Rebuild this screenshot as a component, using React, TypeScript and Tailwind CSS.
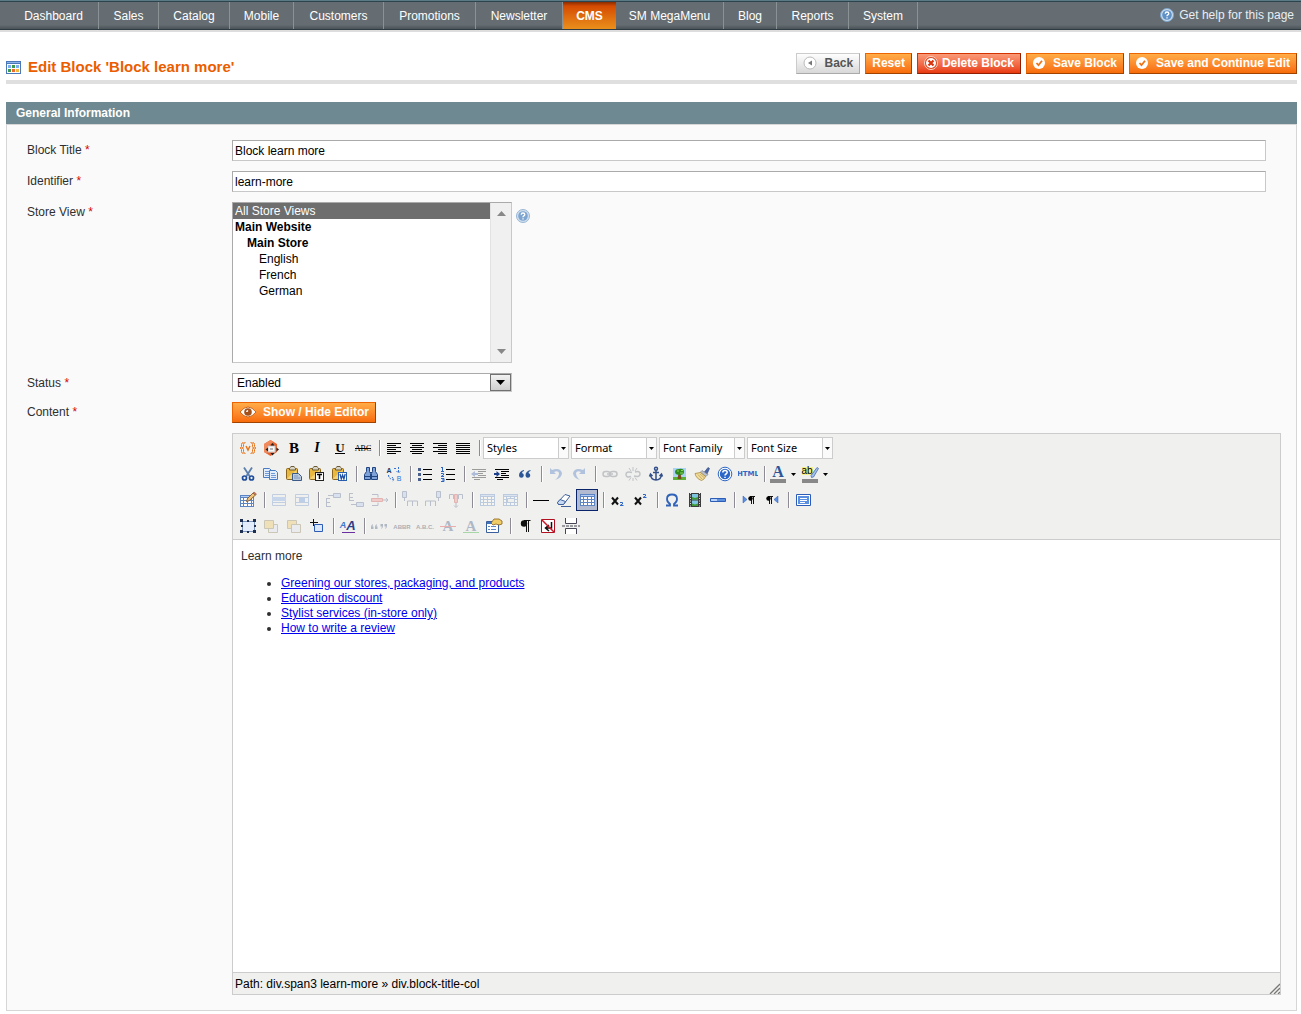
import React from 'react';
import clsx from 'clsx';

const navItems = [
  { name: 'Dashboard', width: 'w-[90px]' },
  { name: 'Sales', width: 'w-[60px]' },
  { name: 'Catalog', width: 'w-[71px]' },
  { name: 'Mobile', width: 'w-[64px]' },
  { name: 'Customers', width: 'w-[90px]' },
  { name: 'Promotions', width: 'w-[92px]' },
  { name: 'Newsletter', width: 'w-[87px]' },
  { name: 'CMS', width: 'w-[53px]' },
  { name: 'SM MegaMenu', width: 'w-[108px]' },
  { name: 'Blog', width: 'w-[53px]' },
  { name: 'Reports', width: 'w-[72px]' },
  { name: 'System', width: 'w-[69px]' },
];

const links = [
  'Greening our stores, packaging, and products',
  'Education discount',
  'Stylist services (in-store only)',
  'How to write a review',
];

const BLUE = '#2b5797';

/* Small shapes shared by the toolbar icons */

const Lines: React.FC<{ rows: number[][]; color?: string }> = ({ rows, color = '#000' }) => (
  <g shapeRendering="crispEdges" fill={color}>
    {rows.map(([x, y, w]) => <rect key={`${x}-${y}`} x={x} y={y} width={w} height="1" />)}
  </g>
);

const Page: React.FC<{ x: number; y: number }> = ({ x, y }) => (
  <g>
    <path d={`M${x + 0.5} ${y + 0.5}h6l2 2v7h-8z`} fill="#e4eefb" stroke="#4a7cc4" />
    <path d={`M${x + 2} ${y + 3.5}h4M${x + 2} ${y + 5.5}h5M${x + 2} ${y + 7.5}h5`} stroke="#6f9bd8" />
  </g>
);

const Clipboard: React.FC = () => (
  <g>
    <rect x="2.5" y="4.5" width="11" height="11" rx="1" fill="#e9b93f" stroke="#8a651b" />
    <path d="M3.500 14l9-8v9h-9z" fill="#f3d27a" />
    <path d="M5.500 4.500c0-1 1.500-1 1.500-2h3c0 1 1.500 1 1.500 2v1.500h-6z" fill="#d8d4c8" stroke="#6b5a33" />
  </g>
);

const Grid: React.FC<{ x?: number; y?: number; w?: number }> = ({ x = 3, y = 4, w = 15 }) => (
  <g shapeRendering="crispEdges">
    <rect x={x} y={y} width={w} height="12" fill="#fff" />
    <path
      d={`M${x + 0.5} ${y + 0.5}h${w - 1}v11h-${w - 1}zM${x} ${y + 5.5}h${w}M${x} ${y + 8.5}h${w}M${x + 3.5} ${y + 3}v9M${x + 7.5} ${y + 3}v9M${x + 11.5} ${y + 3}v9`}
      fill="none"
      stroke="#5d86c2"
    />
    <rect x={x} y={y} width={w} height="3" fill="#5b84c4" />
    <rect x={x + 1} y={y + 1} width={w - 2} height="1" fill="#b4cdf0" />
  </g>
);

const Glyph: React.FC<{ x?: number; y: number; className: string; fill?: string; children: string }> = ({ x = 10, y, className, fill, children }) => (
  <text x={x} y={y} textAnchor="middle" fill={fill} className={className}>{children}</text>
);

const smallCaps = "font-['Liberation_Sans'] text-[6px] font-bold";
const serifBold = "font-['Liberation_Serif'] text-[15px] font-bold";

const icons: Record<string, React.ReactNode> = {
  'Insert Variable': (
    <g fill="none" stroke="#e8761c" strokeWidth="1">
      <path d="M5.500 4.500q-2 0-2 2v2q0 1.500-1.500 1.500 1.500 0 1.500 1.500v2q0 2 2 2M7.500 4.500q-2 0-2 2v2q0 1.500-1.500 1.500 1.500 0 1.500 1.500v2q0 2 2 2" />
      <path d="M14.500 4.500q2 0 2 2v2q0 1.500 1.500 1.500-1.500 0-1.500 1.500v2q0 2-2 2M12.500 4.500q2 0 2 2v2q0 1.500 1.500 1.500-1.500 0-1.500 1.500v2q0 2-2 2" />
      <path d="M8 8l2 4 2-4" strokeWidth="1.500" />
    </g>
  ),
  'Insert Widget': (
    <g>
      <path d="M3 6l6.500-4L16 6v8l-6.500 4L3 14z" fill="#e9632f" />
      <path d="M3 6l6.500-4 3 2-6 4v8L3 14z" fill="#f08a5d" />
      <path d="M7 8h7v6H7z" fill="#f7f7f7" stroke="#c9c9c9" />
      <path d="M9 10h3v2H9z" fill="#b5b5b5" />
      <path d="M9.500 7.500L11.500 5l2 2.500zM9.500 15l2 2.500 2-2.500zM7 9.500l-2.500 2L7 13.500zM15.500 9.500l2.500 2-2.500 2z" fill="#222" />
    </g>
  ),
  Bold: <Glyph y={15} className={serifBold}>B</Glyph>,
  Italic: <Glyph y={14} className="font-['Liberation_Serif'] text-[14px] font-bold italic">I</Glyph>,
  Underline: <g><Glyph y={14} className="font-['Liberation_Serif'] text-[13px] font-bold">U</Glyph><path d="M5 15.500h10" stroke="#000" /></g>,
  Strikethrough: <g><Glyph y={13} className="font-['Liberation_Serif'] text-[8px]">ABC</Glyph><path d="M2 10.500h16" stroke="#000" /></g>,
  'Align Left': <Lines rows={[[3, 5, 14], [3, 7, 9], [3, 9, 14], [3, 11, 9], [3, 13, 14], [3, 15, 9]]} />,
  'Align Center': <Lines rows={[[3, 5, 14], [5, 7, 10], [3, 9, 14], [5, 11, 10], [3, 13, 14], [5, 15, 10]]} />,
  'Align Right': <Lines rows={[[3, 5, 14], [8, 7, 9], [3, 9, 14], [8, 11, 9], [3, 13, 14], [8, 15, 9]]} />,
  'Align Full': <Lines rows={[[3, 5, 14], [3, 7, 14], [3, 9, 14], [3, 11, 14], [3, 13, 14], [3, 15, 14]]} />,
  Cut: (
    <g fill="none">
      <path d="M6 3.500l5.500 8.500M14 3.500L8.500 12" stroke="#5a7fae" strokeWidth="1.800" />
      <circle cx="6.500" cy="14" r="2" stroke="#1f4e9c" strokeWidth="1.700" />
      <circle cx="13.500" cy="14" r="2" stroke="#1f4e9c" strokeWidth="1.700" />
    </g>
  ),
  Copy: <g><Page x={2} y={4} /><Page x={8} y={6} /></g>,
  Paste: <g><Clipboard /><path d="M8.500 9.500h6l3 3v4h-9z" fill="#b9c9de" stroke="#3c5a86" /><path d="M10 12h4M10 14h6" stroke="#7f98bd" /></g>,
  'Paste Text': <g><Clipboard /><rect x="8.500" y="8.500" width="8" height="8" fill="#fff" stroke="#222" /><path d="M10 10.500h5M12.500 10v5" stroke="#000" strokeWidth="1.500" /></g>,
  'Paste Word': <g><Clipboard /><rect x="8.500" y="8.500" width="8" height="8" fill="#fff" stroke="#2b5fb0" /><path d="M10 10l1.300 5 1.300-4 1.300 4 1.300-5" fill="none" stroke="#1d4fa3" strokeWidth="1.300" /></g>,
  Find: (
    <g stroke="#1f4480">
      <path d="M5.500 3.500h3v4l1 2v6h-6v-5l2-3z" fill="#7fa3d9" />
      <path d="M11.500 3.500h3v4l2 3v5h-6v-6l1-2z" fill="#7fa3d9" />
      <path d="M3.500 12.500h6M10.500 12.500h6M9 8.500h2" />
    </g>
  ),
  Replace: (
    <g>
      <Glyph x={5} y={9} className="font-['Liberation_Sans'] text-[7px] font-bold" fill="#223a66">A</Glyph>
      <Glyph x={15} y={17} className="font-['Liberation_Sans'] text-[7px]" fill="#2f6fe0">B</Glyph>
      <path d="M10 4.500h3M12.500 7l2 2 2-2M14.500 3v6M4.500 11q0 4 5 4.500M8 13l2 2.500-2 2" fill="none" stroke="#3570d4" strokeDasharray="2 1" />
    </g>
  ),
  'Bullet List': (
    <g>
      <Lines rows={[[8, 5, 9], [8, 10, 9], [8, 15, 9]]} />
      <path d="M3 4h3v3H3zM3 9h3v3H3zM3 14h3v3H3z" fill="#4a5f8c" />
    </g>
  ),
  'Numbered List': (
    <g>
      <Lines rows={[[8, 5, 9], [8, 10, 9], [8, 15, 9]]} />
      <path d="M4.500 3v4M3 3.500h2M3 7.500h3M3 9.500h2.500v1.500L3 12.500h3M3 14.500h3v3H3M4 16h2" fill="none" stroke="#2e66c4" />
    </g>
  ),
  Outdent: (
    <g>
      <Lines rows={[[3, 5, 14], [9, 7, 8], [9, 9, 5], [9, 11, 8], [3, 13, 14], [5, 15, 6]]} />
      <path d="M2 10l4-3v2h3v2H6v2z" fill="#2c5cb5" />
    </g>
  ),
  Indent: (
    <g>
      <Lines rows={[[3, 5, 14], [9, 7, 8], [9, 9, 5], [9, 11, 8], [3, 13, 14], [5, 15, 6]]} />
      <path d="M8 10L4.500 7v2H2v2h2.500v2z" fill="#1c3f8c" />
    </g>
  ),
  Blockquote: <path d="M9 6q-5 1-5 5.500a2.400 2.400 0 1 0 3-2.500q0-1.500 2-2zM15.500 6q-5 1-5 5.500a2.400 2.400 0 1 0 3-2.500q0-1.500 2-2z" fill={BLUE} />,
  Undo: <path d="M4 4v6h6L8 8q4-2 5 1 0 4-4 7 7-2 7-7-2-6-10-3z" fill="#3d6fc2" />,
  Redo: <path d="M16 4v6h-6l2-2q-4-2-5 1 0 4 4 7-7-2-7-7 2-6 10-3z" fill="#3d6fc2" />,
  Link: (
    <g fill="none" stroke="#6b7280" strokeWidth="1.500">
      <rect x="3" y="7.500" width="7" height="5" rx="2.500" />
      <rect x="10" y="7.500" width="7" height="5" rx="2.500" />
      <path d="M7 10h6" />
    </g>
  ),
  Unlink: (
    <g fill="none" stroke="#6b7280" strokeWidth="1.500">
      <path d="M9 8.500Q3 7 3 10.500t5 2M11 12q6 1.500 6-2t-5-2" />
      <path d="M10 3v4M6 4l2 3M14 4l-2 3M10 17v-3M6 16.500l2-3M14 16.500l-2-3" strokeWidth="1" />
    </g>
  ),
  Anchor: (
    <g fill="none" stroke="#33518a" strokeWidth="1.500">
      <circle cx="10" cy="4.800" r="1.500" />
      <path d="M10 6.500v9.500M7 8.500h6M4.500 10.500q.5 5.500 5.500 5.500t5.500-5.500M3.500 12.500l1-2.500 2 2M16.500 12.500l-1-2.500-2 2" />
    </g>
  ),
  Image: (
    <g>
      <rect x="4" y="4" width="13" height="12" fill="#a9d4f5" />
      <rect x="4" y="13" width="13" height="3" fill="#5fae35" />
      <path d="M9.500 9h2l1 6H8.500z" fill="#7a4a1e" />
      <path d="M6 8q0-3 4-3 5-1 5 3 0 3-4 3-5 0-5-3z" fill="#2f8a1d" />
      <path d="M8 7h2M11 9h3M12 6.500h2" stroke="#8bd45a" />
    </g>
  ),
  Cleanup: (
    <g>
      <path d="M12.500 8L16 3.500l1.500 1L15 10z" fill="#4a67a8" stroke="#2c4377" strokeWidth=".6" />
      <path d="M10 6.500l6 4-2 2-6-4z" fill="#b7bfce" stroke="#777" strokeWidth=".6" />
      <path d="M8.500 8.500L3 9.500q1 5 6.500 7 3-1 4-4z" fill="#f0dc9c" stroke="#a98a3c" strokeWidth=".8" />
      <path d="M6 10.500l4 4.500M8 10l4 3.500" stroke="#c2a559" strokeWidth=".8" />
    </g>
  ),
  Help: (
    <g>
      <circle cx="10" cy="10" r="6.800" fill="#fff" stroke="#2f67c4" />
      <circle cx="10" cy="10" r="5.200" fill="#2b66c9" />
      <path d="M7.800 8.500q0-2 2.200-2t2.200 1.800q0 1-1.200 1.700-1 .6-1 1.500M10 12.800v1.200" fill="none" stroke="#fff" strokeWidth="1.500" />
    </g>
  ),
  'Edit HTML Source': <Glyph y={12} className="font-['DejaVu_Sans'] text-[7px] font-bold" fill="#2f67c4">HTML</Glyph>,
  'Text Color': <g><Glyph y={13} className="font-['Liberation_Serif'] text-[16px] font-bold" fill="#2d5597">A</Glyph><path d="M2 15h16v4H2z" fill="#888" /></g>,
  'Background Color': (
    <g>
      <path d="M2 3h11v8H2z" fill="#f4f08a" />
      <Glyph x={7} y={10} className="font-['Liberation_Sans'] text-[10px]">ab</Glyph>
      <path d="M17 3.500l-6 8 .5 2 2-.5 5-8.500z" fill="#9fc0ee" stroke="#3a5f9e" strokeWidth=".7" />
      <path d="M2 15h16v4H2z" fill="#888" />
    </g>
  ),
  'Insert Table': (
    <g>
      <Grid x={2} y={5} w={14} />
      <path d="M8.500 11.500l1-3L15 3l2.500 2-6 5.500z" fill="#f0c37a" stroke="#7a4d20" strokeWidth=".8" />
      <path d="M15 3l1-1 2.500 2-1 1z" fill="#d87c6c" stroke="#7a4d20" strokeWidth=".5" />
    </g>
  ),
  'Row Properties': <g fill="none" stroke="#6b8fc9"><path d="M3.500 4.500h13v11h-13zM3 12.500h14" /><path d="M3 7h14v4H3z" fill="#7fa8e8" stroke="none" /></g>,
  'Cell Properties': <g fill="none" stroke="#6b8fc9"><path d="M3.500 4.500h13v11h-13zM3 7.500h14M3 12.500h14" /><path d="M7 8h6v4H7z" fill="#5f91e0" stroke="none" /></g>,
  'Row Before': <g fill="none" stroke="#556a8c"><path d="M3.500 8v9M3 8.500h4M3 12.500h4M3 16.500h5M5 5.500h5" /><path d="M10.500 3.500h7v4h-7z" fill="#a9c6f5" /></g>,
  'Row After': <g fill="none" stroke="#556a8c"><path d="M3.500 3v8M3 3.500h4M3 7.500h4M3 10.500h5M5 14.500h5" /><path d="M10.500 12.500h7v4h-7z" fill="#a9c6f5" /></g>,
  'Delete Row': <g fill="none" stroke="#556a8c"><path d="M3 4.500h6v3M3 15.500h6v-3M14 10h5M17 8l2 2-2 2" /><path d="M2.500 8.500h11v3h-11z" fill="#e88" stroke="#c44" /></g>,
  'Column Before': <g fill="none" stroke="#556a8c"><path d="M7.500 16v-5h10v5M12.500 11v5M4.500 7v4" /><path d="M2.500 1.500h4v6h-4z" fill="#a9c6f5" /></g>,
  'Column After': <g fill="none" stroke="#556a8c"><path d="M2.500 16v-5h10v5M7.500 11v5M15.500 7v4" /><path d="M13.500 1.500h4v6h-4z" fill="#a9c6f5" /></g>,
  'Delete Column': <g fill="none" stroke="#556a8c"><path d="M3.500 9V4.500h4V9M12.500 9V4.500h4V9M10 13v4M8 15.500l2 2 2-2" /><path d="M8.500 4.500h3v8h-3z" fill="#e88" stroke="#c44" /></g>,
  'Split Cells': <Grid x={3} y={4} w={15} />,
  'Merge Cells': <g><Grid x={3} y={4} w={15} /><path d="M7.500 8.500h7v4h-7z" fill="#f0f0ee" stroke="#5d86c2" /></g>,
  'Horizontal Rule': <Lines rows={[[2, 10, 16]]} />,
  'Remove Formatting': <g><path d="M3.500 12.500L11 4.500l5 1.500-6.500 8.500h-5z" fill="#fff" stroke="#3d5f9c" /><path d="M3.500 12.500l2.500-3 5.500 2-2 3h-5z" fill="#c9daf3" stroke="#3d5f9c" /><path d="M7 16.500h10" stroke="#3d5f9c" /></g>,
  'Toggle Guidelines': <Grid x={3} y={4} w={15} />,
  Subscript: <g><path d="M4 7.500l6 7M10 7.500l-6 7" stroke="#111" strokeWidth="2" /><path d="M12 12.500h2.500v1.500L12 15.500h3.500" fill="none" stroke="#2e66c4" /></g>,
  Superscript: <g><path d="M4 7.500l6 7M10 7.500l-6 7" stroke="#111" strokeWidth="2" /><path d="M12 4.500h2.500V6L12 7.500h3.500" fill="none" stroke="#2e66c4" /></g>,
  'Custom Character': <path d="M4 15.500h4v-1.500Q5 12 5 9q0-4.500 5-4.500T15 9q0 3-3 5v1.500h4" fill="none" stroke="#2f62b8" strokeWidth="1.800" />,
  Media: (
    <g>
      <path d="M4 3h12v14H4z" fill="#3c3c3c" />
      <path d="M7 4h6v5.500H7zM7 10.500h6V16H7z" fill="#7fc4e0" />
      <path d="M7 7l3 1 3-1v2.500H7zM7 13.500l3 1 3-1V16H7z" fill="#3f9a35" />
      <path d="M5.500 3v14M14.500 3v14" stroke="#ddd" strokeDasharray="1 1.500" />
    </g>
  ),
  'Advanced Rule': <g><path d="M2.500 8.500h15v3h-15z" fill="#5b8fe0" stroke="#2c5cb5" /><path d="M3 9h6v2H3z" fill="#b6d1fa" /></g>,
  'Left to Right': <g><path d="M4 6l4 3.500L4 13z" fill="#5b8fe0" stroke="#2c5cb5" strokeWidth=".5" /><path d="M12.500 6v8M14.500 6v8M16 6.500h-5" stroke="#111" strokeWidth="1" /><circle cx="11.500" cy="8.500" r="2.200" /></g>,
  'Right to Left': <g><path d="M16 6l-4 3.500 4 3.500z" fill="#5b8fe0" stroke="#2c5cb5" strokeWidth=".5" /><path d="M7.500 6v8M9.500 6v8M11 6.500H6" stroke="#111" strokeWidth="1" /><circle cx="6.500" cy="8.500" r="2.200" /></g>,
  Fullscreen: <g><path d="M3.500 4.500h14v11h-14z" fill="#fff" stroke="#2c5cb5" /><path d="M5 6h11v8H5z" fill="#5b8fe0" /><path d="M7 8.500h7M7 10.500h7M7 12.500h5" stroke="#fff" /></g>,
  'Insert Layer': (
    <g>
      <path d="M4.500 5.500h12v10h-12z" fill="#e3edfb" stroke="#7b95bd" />
      <path d="M2 3h3v3H2zM9 4h2v2H9zM15 3h3v3h-3zM2 14h3v3H2zM9 15h2v2H9zM15 14h3v3h-3zM3 9h2v2H3zM16 9h2v2h-2z" fill="#1d2e50" />
    </g>
  ),
  'Move Forward': <g stroke="#8a7a50"><path d="M7.500 8.500h9v8h-9z" fill="#dde4ee" /><path d="M3.500 4.500h9v8h-9z" fill="#f1c453" /></g>,
  'Move Backward': <g stroke="#8a7a50"><path d="M3.500 4.500h9v8h-9z" fill="#f1c453" /><path d="M7.500 8.500h9v8h-9z" fill="#dde4ee" /></g>,
  'Absolute Position': <g><path d="M7.500 8.500h8v7h-8z" fill="#dbe8fb" stroke="#2c5cb5" /><path d="M3 6.500h8M6.500 3v7" stroke="#111" /></g>,
  'Edit CSS Style': (
    <g>
      <Glyph x={5} y={12} className="font-['Liberation_Sans'] text-[9px] font-bold italic" fill="#3b78cf">A</Glyph>
      <Glyph x={13} y={14} className="font-['Liberation_Sans'] text-[13px] font-bold italic" fill="#2d3f86">A</Glyph>
      <path d="M4 16.500h13" stroke="#6a2fa0" />
    </g>
  ),
  Citation: <path d="M4 8q-2 1-2 3v2h2.500v-2.500H3.500zM8 8q-2 1-2 3v2h2.500v-2.500H7.500zM12 13q2-1 2-3V8h-2.500v2.500H13zM16 13q2-1 2-3V8h-2.500v2.500H17z" fill="#3a4f78" />,
  Abbreviation: <Glyph y={13} className={smallCaps} fill="#222f50">ABBR</Glyph>,
  Acronym: <Glyph y={13} className={smallCaps} fill="#222f50">A.B.C.</Glyph>,
  Deletion: <g><Glyph y={15} className={serifBold} fill="#35507f">A</Glyph><path d="M2 10.500h16" stroke="#d33" /></g>,
  Insertion: <g><Glyph y={15} className={serifBold} fill="#35507f">A</Glyph><path d="M2 16.500h16" stroke="#2a2" /></g>,
  Attributes: (
    <g>
      <path d="M2.500 5.500h12v11h-12z" fill="#fff" stroke="#3a5f9e" />
      <path d="M3 6h11v2H3z" fill="#3f72bd" />
      <path d="M4 10.500h2M7 10.500h5M4 13.500h2M7 13.500h5" stroke="#5d86c2" />
      <path d="M7 7l3-4h5l3 2v3l-3 1-3-1-3 1z" fill="#f1cd68" stroke="#86601a" strokeWidth=".8" />
    </g>
  ),
  'Visual Characters': <g><path d="M11.500 4v12M13.500 4v12M15.500 4.500H9" stroke="#111" /><circle cx="9" cy="7.500" r="3.200" fill="#111" /></g>,
  'Non-breaking Space': <g><path d="M3.500 3.500h13v13h-13z" fill="#fff" stroke="#b01020" /><path d="M13.500 6v6H8M11 9l-3.500 3 3.500 3" fill="none" stroke="#111" strokeWidth="1.500" /><path d="M4 4l12 12" stroke="#cc1828" strokeWidth="1.500" /></g>,
  'Page Break': <g fill="#fff" stroke="#445"><path d="M4.500 2v5.500h11V2M4.500 18v-5.500h11V18" /><path d="M1 10h18" strokeDasharray="3 1" /></g>,
};

const disabled = [
  'Outdent', 'Undo', 'Redo', 'Link', 'Unlink', 'Row Properties', 'Cell Properties',
  'Row Before', 'Row After', 'Delete Row', 'Column Before', 'Column After', 'Delete Column',
  'Split Cells', 'Merge Cells', 'Move Forward', 'Move Backward', 'Citation', 'Abbreviation',
  'Acronym', 'Deletion', 'Insertion',
];

// '|' is a separator between groups
const toolbarRows = [
  ['Insert Variable', 'Insert Widget', 'Bold', 'Italic', 'Underline', 'Strikethrough', '|',
    'Align Left', 'Align Center', 'Align Right', 'Align Full', '|',
    'Styles', 'Format', 'Font Family', 'Font Size'],
  ['Cut', 'Copy', 'Paste', 'Paste Text', 'Paste Word', '|', 'Find', 'Replace', '|',
    'Bullet List', 'Numbered List', '|', 'Outdent', 'Indent', 'Blockquote', '|', 'Undo', 'Redo', '|',
    'Link', 'Unlink', 'Anchor', 'Image', 'Cleanup', 'Help', 'Edit HTML Source', '|',
    'Text Color', 'Background Color'],
  ['Insert Table', '|', 'Row Properties', 'Cell Properties', '|', 'Row Before', 'Row After', 'Delete Row', '|',
    'Column Before', 'Column After', 'Delete Column', '|', 'Split Cells', 'Merge Cells', '|',
    'Horizontal Rule', 'Remove Formatting', 'Toggle Guidelines', '|', 'Subscript', 'Superscript', '|',
    'Custom Character', 'Media', 'Advanced Rule', '|', 'Left to Right', 'Right to Left', '|', 'Fullscreen'],
  ['Insert Layer', 'Move Forward', 'Move Backward', 'Absolute Position', '|', 'Edit CSS Style', '|',
    'Citation', 'Abbreviation', 'Acronym', 'Deletion', 'Insertion', 'Attributes', '|',
    'Visual Characters', 'Non-breaking Space', 'Page Break'],
];

const selects = ['Styles', 'Format', 'Font Family', 'Font Size'];

const ToolbarItem: React.FC<{ name: string }> = ({ name }) => {
  if (name === '|') {
    return <span className="ml-1 mr-0.5 h-4 w-0.5 border-l border-[#8e8b96] bg-white" />;
  }
  if (selects.includes(name)) {
    return (
      <span className="mr-0.5 flex h-[22px] w-[86px] border border-[#ccc] bg-white">
        <select aria-label={name} className="min-w-0 flex-1 appearance-none pl-[3px] font-['Noto_Sans',sans-serif] text-[11px] leading-5 text-black">
          <option>{name}</option>
        </select>
        <span className="flex w-2.5 items-center justify-center border-l border-[#ccc] bg-[#fafafa]">
          <svg viewBox="0 0 5 3" className="h-[3px] w-[5px]"><path d="M0 0h5L2.500 3z" /></svg>
        </span>
      </span>
    );
  }
  const split = name === 'Text Color' || name === 'Background Color';
  return (
    <button
      type="button"
      aria-label={name}
      disabled={disabled.includes(name)}
      className={clsx(
        'mr-px flex h-[22px] items-center justify-center',
        split ? 'w-[31px]' : 'w-[22px]',
        name === 'Toggle Guidelines' && 'border border-[#0a246a] bg-[#b2bbd0]'
      )}
    >
      <svg viewBox="0 0 20 20" className={clsx('size-5 shrink-0', disabled.includes(name) && 'opacity-35')}>
        {icons[name]}
      </svg>
      {split && <svg viewBox="0 0 11 5" className="h-[5px] w-[11px] shrink-0"><path d="M3 1h5L5.500 4z" /></svg>}
    </button>
  );
};

const HelpBadge: React.FC<{ className?: string }> = ({ className }) => (
  <svg viewBox="0 0 14 14" className={clsx('size-3.5 shrink-0', className)}>
    <circle cx="7" cy="7" r="6.500" fill="#c9dcee" stroke="#7fa5cc" />
    <circle cx="7" cy="7" r="4.800" fill="#5f90c6" />
    <path d="M5.200 5.800q0-1.800 1.800-1.800t1.800 1.500q0 .9-1 1.400-.8.500-.8 1.300M7 9.300v1.200" fill="none" stroke="#fff" strokeWidth="1.300" />
  </svg>
);

const BackIcon = (
  <svg viewBox="0 0 14 14" className="mr-2 size-3.5">
    <circle cx="7" cy="7" r="6" fill="#fff" stroke="#bbb" />
    <path d="M9 4.500v5L5 7z" fill="#777" />
  </svg>
);

const DeleteIcon = (
  <svg viewBox="0 0 14 14" className="mr-1 size-3.5">
    <circle cx="7" cy="7" r="6.500" fill="#d8431a" stroke="#fbd3c4" />
    <circle cx="7" cy="7" r="5" fill="#fff" />
    <path d="M4.500 4.500l5 5M9.500 4.500l-5 5" stroke="#d8350f" strokeWidth="2.200" />
  </svg>
);

const SaveIcon = (
  <svg viewBox="0 0 14 14" className="mr-1.5 size-3.5">
    <circle cx="6" cy="7" r="6" fill="#fff" />
    <path d="M3.500 7l2 2.200L9 4.800" fill="none" stroke="#ee7418" strokeWidth="1.800" />
  </svg>
);

const EyeIcon = (
  <svg viewBox="0 0 18 14" className="mr-1.5 h-3.5 w-[18px]">
    <path d="M1 7q8-10 16 0-8 10-16 0z" fill="#fff" stroke="#c9651b" />
    <circle cx="9" cy="7" r="3.800" fill="#a3501a" />
    <path d="M7 7q0-2 2-2 1 2-2 2z" fill="#fff" />
  </svg>
);

const orange = 'border-t-[#ed6502] border-l-[#ed6502] border-r-[#a04300] border-b-[#a04300] from-[#ffac47] to-[#f76b07] text-white';
const red = 'border-t-[#d43300] border-l-[#d43300] border-r-[#8f1f00] border-b-[#8f1f00] from-[#fa9a78] to-[#e8370a] text-white';
const gray = 'border-t-[#ccc] border-l-[#ccc] border-r-[#aaa] border-b-[#aaa] from-[#fefefe] to-[#d8d8d8] text-[#555]';

const Button: React.FC<{ tone: string; icon?: React.ReactNode; children: string }> = ({ tone, icon, children }) => (
  <button type="button" className={clsx('flex h-[21px] items-center border bg-linear-to-b px-1.5 pb-0.5 text-[12px] leading-4 font-bold whitespace-nowrap', tone)}>
    {icon}
    {children}
  </button>
);

const Label: React.FC<{ htmlFor: string; children: string }> = ({ htmlFor, children }) => (
  <label htmlFor={htmlFor} className="h-[19px] leading-5">
    {children} <span className="text-[#d40707]">*</span>
  </label>
);

const field = 'border border-[#aaa] border-r-[#c8c8c8] border-b-[#c8c8c8] bg-white text-black';

const App: React.FC = () => {
  return (
    <div className="bg-white font-['Liberation_Sans',Arial,sans-serif] text-[12px] text-[#2f2f2f]">
      {/* Navigation */}
      <header className="border-b border-[#eee]">
        <nav className="flex h-[30px] items-stretch justify-between border-t border-b border-t-[#5a7a86] border-b-[#2f3b42] bg-linear-to-b from-[#656d72] from-85% to-[#4a5358] pl-[9px] shadow-[inset_0_1px_0_#2d444f,0_2px_0_#ddd]">
          <ul className="flex pt-px text-white">
            {navItems.map((item) => (
              <li key={item.name} className={clsx('flex', item.width)}>
                <a
                  href="#"
                  className={clsx(
                    'flex flex-1 items-center justify-center whitespace-nowrap',
                    item.name === 'CMS'
                      ? 'bg-linear-to-b from-[#8a2c00] via-[#d44a02] via-15% to-[#ea8f1b] font-bold'
                      : 'border-r border-[#8b9296]'
                  )}
                >
                  {item.name}
                </a>
              </li>
            ))}
          </ul>
          <a href="#" className="flex items-center gap-[5px] pr-[7px] text-[#e8eef2]">
            <HelpBadge />
            Get help for this page
          </a>
        </nav>
      </header>

      <main className="pt-[22px] pr-1 pb-1 pl-1.5">
        {/* Page title and actions */}
        <div className="flex h-[31px] justify-between border-b-4 border-[#dfdfdf]">
          <h1 className="flex h-7 items-center gap-[7px] text-[15px] font-bold text-[#eb5e00]">
            <svg viewBox="0 0 15 13" className="h-[13px] w-[15px]" shapeRendering="crispEdges">
              <path d="M0 0h15v13H0z" fill="#4a78b8" />
              <path d="M1 1h13v1H1z" fill="#8db4e8" />
              <path d="M1 3h13v9H1z" fill="#fff" />
              <path d="M2 4h3v3H2z" fill="#7ab0ee" /><path d="M6 4h3v3H6z" fill="#3f9a4f" /><path d="M10 4h3v3h-3z" fill="#7ab0ee" />
              <path d="M2 8h3v3H2z" fill="#3f9a4f" /><path d="M6 8h3v3H6z" fill="#ee6a30" /><path d="M10 8h3v3h-3z" fill="#f0b83c" />
            </svg>
            Edit Block 'Block learn more'
          </h1>
          <div className="flex gap-[5px]">
            <Button tone={gray} icon={BackIcon}>Back</Button>
            <Button tone={orange}>Reset</Button>
            <Button tone={red} icon={DeleteIcon}>Delete Block</Button>
            <Button tone={orange} icon={SaveIcon}>Save Block</Button>
            <Button tone={orange} icon={SaveIcon}>Save and Continue Edit</Button>
          </div>
        </div>

        {/* Form */}
        <section className="mt-[18px]">
          <h2 className="h-[22px] bg-[#6f8992] px-2.5 leading-[22px] font-bold text-white">General Information</h2>
          <form className="grid grid-cols-[205px_minmax(0,1fr)] gap-y-2.5 border border-[#d6d6d6] bg-[#fafafa] py-[15px] pr-[15px] pl-5">
            <Label htmlFor="title">Block Title</Label>
            <input id="title" type="text" defaultValue="Block learn more" className={clsx('mr-[15px] h-[21px] px-0.5', field)} />

            <Label htmlFor="identifier">Identifier</Label>
            <input id="identifier" type="text" defaultValue="learn-more" className={clsx('mr-[15px] h-[21px] px-0.5', field)} />

            <Label htmlFor="store">Store View</Label>
            <div className="flex">
              <div className={clsx('flex h-[161px] w-[280px]', field)}>
                <select
                  id="store"
                  multiple
                  size={9}
                  defaultValue={['0']}
                  className="flex-1 overflow-hidden p-0 [&_option]:h-4 [&_option]:min-h-0 [&_option]:pt-px [&_option]:pb-0 [&_option]:leading-4"
                >
                  <option value="0" className="px-0.5 checked:bg-[linear-gradient(#6e6e6e,#6e6e6e)] checked:text-white">All Store Views</option>
                  <option disabled className="px-0.5 font-bold text-black">Main Website</option>
                  <option disabled className="pl-3.5 font-bold text-black">Main Store</option>
                  <option value="1" className="pl-[26px]">English</option>
                  <option value="2" className="pl-[26px]">French</option>
                  <option value="3" className="pl-[26px]">German</option>
                </select>
                <div className="flex w-[21px] flex-col items-center justify-between border-l border-[#e3e3e3] bg-[#f0f0f0] py-2">
                  <svg viewBox="0 0 9 5" className="h-[5px] w-[9px]"><path d="M0 5h9L4.500 0z" fill="#888" /></svg>
                  <svg viewBox="0 0 9 5" className="h-[5px] w-[9px]"><path d="M0 0h9L4.500 5z" fill="#888" /></svg>
                </div>
              </div>
              <HelpBadge className="mt-[7px] ml-1 opacity-80" />
            </div>

            <Label htmlFor="status">Status</Label>
            <div className={clsx('flex h-[19px] w-[280px]', field)}>
              <select id="status" className="min-w-0 flex-1 appearance-none pt-px pl-1 leading-4">
                <option>Enabled</option>
                <option>Disabled</option>
              </select>
              <span className="flex w-[21px] items-center justify-center border border-[#707070] bg-linear-to-b from-[#f2f2f2] to-[#cfcfcf]">
                <svg viewBox="0 0 9 5" className="h-[5px] w-[9px]"><path d="M0 0h9L4.500 5z" /></svg>
              </span>
            </div>

            <Label htmlFor="content">Content</Label>
            <div className="flex">
              <Button tone={orange} icon={EyeIcon}>Show / Hide Editor</Button>
            </div>

            {/* Editor */}
            <div className="col-start-2 border border-[#ccc] bg-white">
              <div className="flex flex-col gap-1 border-b border-[#ccc] bg-[#f0f0ee] pt-[3px] pb-0.5 pl-1">
                {toolbarRows.map((row, i) => (
                  <div key={i} className="flex h-[22px] items-center">
                    {row.map((name, j) => <ToolbarItem key={j} name={name} />)}
                  </div>
                ))}
              </div>
              <div id="content" className="min-h-[432px] px-2 pt-[9px] pb-2 leading-[15px]">
                <p>Learn more</p>
                <ul className="mt-3 list-disc pl-10">
                  {links.map((link) => (
                    <li key={link}><a href="#" className="text-[#00e] underline">{link}</a></li>
                  ))}
                </ul>
              </div>
              <div className="flex h-[22px] items-end justify-between border-t border-[#ccc] bg-[#f0f0ee] pl-0.5 text-black">
                <span className="leading-5">Path: div.span3 learn-more » div.block-title-col</span>
                <svg viewBox="0 0 11 11" className="size-[11px]">
                  <path d="M1 11L11 1M5 11l6-6M9 11l2-2" stroke="#777" strokeWidth="1.300" />
                </svg>
              </div>
            </div>
          </form>
        </section>
      </main>
    </div>
  );
};

export default App;
